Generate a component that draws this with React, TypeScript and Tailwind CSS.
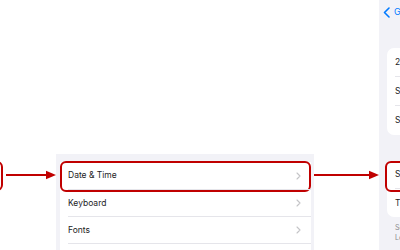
import React from "react";

const Chevron = () => (
  <svg width="5" height="8" viewBox="0 0 5 8" className="shrink-0">
    <path d="M1 1 L4 4 L1 7" fill="none" stroke="#c4c4c7" strokeWidth="1.1" strokeLinecap="round" strokeLinejoin="round" />
  </svg>
);

const Arrow = ({ w }: { w: number }) => (
  <svg width={w} height="10" viewBox={`0 0 ${w} 10`}>
    <line x1="0" y1="5" x2={w - 8} y2="5" stroke="#c00000" strokeWidth="2.2" />
    <polygon points={`${w - 10},0.8 ${w},5 ${w - 10},9.2`} fill="#c00000" />
  </svg>
);

export default function App() {
  const rows = ["Date & Time", "Keyboard", "Fonts", "Language & Region"];
  return (
    <div
      className="w-[400px] h-[250px] bg-white flex overflow-hidden"
      style={{ fontFamily: "Inter, 'Liberation Sans', sans-serif" }}
    >
      {/* left fragment */}
      <div className="w-[6px] shrink-0 pt-[161px]">
        <div className="-ml-[20px] w-[23px] h-[30px] border-[2.5px] border-[#c00000] rounded-[6px]" />
      </div>
      <div className="w-[50px] shrink-0 pt-[170px]">
        <Arrow w={50} />
      </div>

      {/* middle panel */}
      <div className="w-[258px] shrink-0 mt-[154px] h-[96px] bg-[#f2f2f7] pl-[4px] pr-[3px] pt-[8px]">
        <div className="bg-white flex flex-col">
          {rows.map((r, i) => (
            <div key={r} className="relative h-[27px] flex">
              <div
                className={`flex-1 ml-[8px] pr-[10px] flex items-center justify-between ${
                  i > 0 ? "border-t border-[#e5e5ea]" : ""
                }`}
              >
                <span className="text-[8.5px] text-[#1c1c1e]">{r}</span>
                <Chevron />
              </div>
              {i === 0 && (
                <div className="absolute left-0 right-0 -top-[1px] -bottom-[3px] border-[2.5px] border-[#c00000] rounded-[6px]" />
              )}
            </div>
          ))}
        </div>
      </div>

      <div className="w-[65px] shrink-0 pt-[170px]">
        <Arrow w={65} />
      </div>

      {/* right panel */}
      <div className="flex-1 h-full bg-[#f2f2f7] pl-[4px] flex flex-col">
        <div className="h-[24px] flex items-center gap-[4px] whitespace-nowrap">
          <svg width="7" height="11" viewBox="0 0 7 11" className="shrink-0">
            <path d="M6 1 L1.5 5.5 L6 10" fill="none" stroke="#007aff" strokeWidth="1.6" strokeLinecap="round" strokeLinejoin="round" />
          </svg>
          <span className="text-[9px] text-[#007aff]">General</span>
        </div>
        <div className="ml-[4px] mt-[24px] bg-white rounded-l-[7px] flex flex-col whitespace-nowrap">
          {["24-Hour Time", "Show AM/PM", "Show Date"].map((t, i) => (
            <div key={t} className="h-[29px] pl-[8px] flex">
              <div className={`flex-1 flex items-center ${i < 2 ? "border-b border-[#e5e5ea]" : ""}`}>
                <span className="text-[8.5px] text-[#1c1c1e]">{t}</span>
              </div>
            </div>
          ))}
        </div>
        <div className="ml-[4px] mt-[26px] bg-white rounded-l-[7px] flex flex-col whitespace-nowrap">
          {["Set Automatically", "Time Zone"].map((t, i) => (
            <div key={t} className="relative h-[28px] pl-[8px] flex">
              <div className={`flex-1 flex items-center ${i === 0 ? "border-b border-[#e5e5ea]" : ""}`}>
                <span className="text-[8.5px] text-[#1c1c1e]">{t}</span>
              </div>
              {i === 0 && (
                <div className="absolute -left-[2px] -right-[8px] top-0 -bottom-[3px] border-[2.5px] border-[#c00000] rounded-[6px]" />
              )}
            </div>
          ))}
        </div>
        <div className="ml-[12px] mt-[6px] text-[7px] leading-[10px] text-[#8a8a8e] whitespace-nowrap">
          <div>Set automatically using</div>
          <div>Location Services</div>
        </div>
      </div>
    </div>
  );
}
